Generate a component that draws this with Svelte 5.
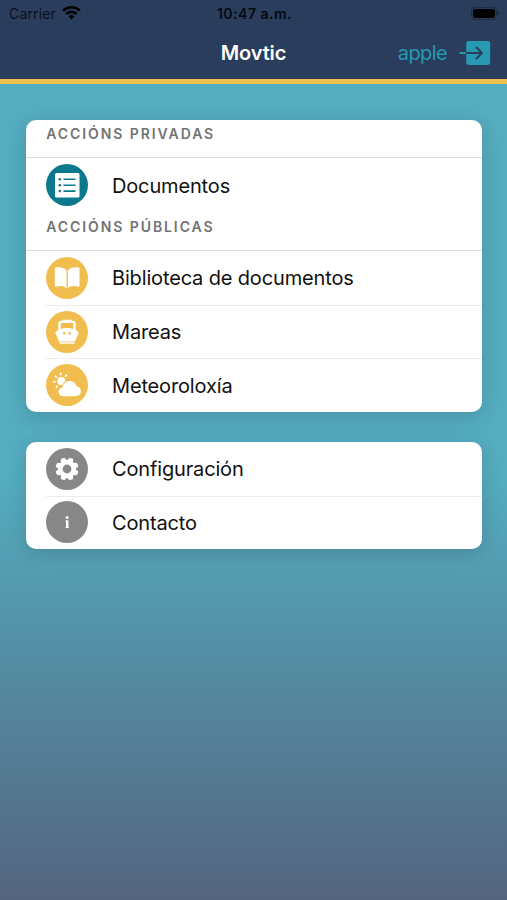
<script lang="ts">
  /**
   * Movtic main menu
   * Status bar, toolbar and grouped navigation cards
   */

  type IconName = 'list' | 'book' | 'boat' | 'weather' | 'gear' | 'info';

  interface Item {
    icon: IconName;
    label: string;
    tone: 'teal' | 'yellow' | 'gray';
  }

  interface Group {
    title?: string;
    items: Item[];
  }

  // Each card holds one or more titled groups
  const cards: Group[][] = [
    [
      {
        title: 'Accións privadas',
        items: [{ icon: 'list', label: 'Documentos', tone: 'teal' }],
      },
      {
        title: 'Accións públicas',
        items: [
          { icon: 'book', label: 'Biblioteca de documentos', tone: 'yellow' },
          { icon: 'boat', label: 'Mareas', tone: 'yellow' },
          { icon: 'weather', label: 'Meteoroloxía', tone: 'yellow' },
        ],
      },
    ],
    [
      {
        items: [
          { icon: 'gear', label: 'Configuración', tone: 'gray' },
          { icon: 'info', label: 'Contacto', tone: 'gray' },
        ],
      },
    ],
  ];

  const user = 'apple';
  const teeth = [0, 45, 90, 135, 180, 225, 270, 315];
  const rays = [-230, -185, -140, -95, -50];
</script>

{#snippet glyph(name: IconName)}
  <svg class="glyph" viewBox="0 0 42 42" aria-hidden="true">
    {#if name === 'list'}
      <rect x="9" y="9" width="24.5" height="24.5" rx="1.5" fill="#fff" />
      <g stroke="currentColor" stroke-width="1.6" stroke-linecap="round">
        <path d="M18 15.3h11M18 21.2h11M18 27.1h11" />
      </g>
      <g fill="currentColor">
        <circle cx="13.8" cy="15.3" r="1.3" />
        <circle cx="13.8" cy="21.2" r="1.3" />
        <circle cx="13.8" cy="27.1" r="1.3" />
      </g>
    {:else if name === 'book'}
      <g fill="#fff">
        <path d="M20.5 13.5C19 10.8 15.5 10 10.2 10.2Q8.8 10.3 8.8 11.7V28.6Q8.8 29.9 10.2 29.8C14.5 28.4 18.2 28.6 20.5 31.6Z" />
        <path d="M21.8 13.5C23.3 10.8 26.8 10 32.1 10.2Q33.5 10.3 33.5 11.7V28.6Q33.5 29.9 32.1 29.8C27.8 28.4 24.1 28.6 21.8 31.6Z" />
      </g>
    {:else if name === 'boat'}
      <path
        d="M13.5 19V12.6Q13.5 10.9 15.2 10.9H26.8Q28.5 10.9 28.5 12.6V19"
        fill="none"
        stroke="#fff"
        stroke-width="2.4"
      />
      <path d="M16.5 10.8V9.7Q16.5 8.8 17.4 8.8H24.6Q25.5 8.8 25.5 9.7V10.8Z" fill="#fff" />
      <path
        d="M12 19.2C15 17.6 18 17 21 17S27 17.6 30 19.2L31.8 20.5Q32.9 21.3 32.5 22.4L29 30.6H13L9.5 22.4Q9.1 21.3 10.2 20.5Z"
        fill="#fff"
      />
      <g fill="currentColor">
        <ellipse cx="18.2" cy="22.2" rx="1.1" ry="1.7" />
        <ellipse cx="23.8" cy="22.2" rx="1.1" ry="1.7" />
      </g>
      <path d="M14 32H28" fill="none" stroke="#fff" stroke-width="1.5" stroke-linecap="round" />
    {:else if name === 'weather'}
      <circle cx="15.4" cy="17.2" r="4.1" fill="#fff" />
      <g stroke="#fff" stroke-width="1.8" stroke-linecap="round">
        {#each rays as angle}
          <path d="M22 17.2h1.3" transform="rotate({angle} 15.4 17.2)" />
        {/each}
      </g>
      <path
        d="M17.5 32.2C14.6 32.2 12.5 30.4 12.5 27.8C12.5 25.5 14.2 23.8 16.6 23.4C17.2 19.5 20.1 17.1 23.7 17.1C27 17.1 29.7 19.2 30.5 22.3C33.2 22.7 35 24.6 35 27.3C35 30.1 32.8 32.2 29.8 32.2Z"
        fill="#fff"
        stroke="currentColor"
        stroke-width="1.6"
        paint-order="stroke"
      />
    {:else if name === 'gear'}
      <g fill="#fff">
        {#each teeth as angle}
          <path
            d="M17.9 13.5L18.7 10.3Q18.9 9.5 19.7 9.5H22.3Q23.1 9.5 23.3 10.3L24.1 13.5Z"
            transform="rotate({angle + 22.5} 21 21)"
          />
        {/each}
      </g>
      <circle cx="21" cy="21" r="6.8" fill="none" stroke="#fff" stroke-width="4.8" />
    {:else}
      <circle cx="21.1" cy="16.4" r="1.5" fill="#fff" />
      <path d="M19.4 20H21.2M19.4 26.5H22.8" fill="none" stroke="#fff" stroke-width="1.1" />
      <path d="M21.2 19.4V27" stroke="#fff" stroke-width="2.5" />
    {/if}
  </svg>
{/snippet}

<div class="screen">
  <header class="header">
    <div class="status-bar">
      <div class="carrier">
        <span>Carrier</span>
        <svg width="19" height="15" viewBox="0 0 19 15" fill="none" stroke="currentColor" stroke-width="2.7">
          <path d="M1.2 5.6a12 12 0 0 1 16.6 0" />
          <path d="M4.3 9a7.6 7.6 0 0 1 10.4 0" />
          <path d="M9.5 14.4L6.6 11.4a4.2 4.2 0 0 1 5.8 0Z" fill="currentColor" stroke="none" />
        </svg>
      </div>
      <span class="time">10:47 a.m.</span>
      <svg class="battery" width="29" height="14" viewBox="0 0 29 14">
        <rect x="0.5" y="0.4" width="25" height="12" rx="3.6" fill="none" stroke="#000" stroke-opacity="0.3" />
        <rect x="2" y="1.9" width="22" height="9" rx="2.3" fill="#000" />
        <path d="M26.8 4.5v4q1.5-.6 1.5-2t-1.5-2" fill="#000" fill-opacity="0.4" />
      </svg>
    </div>

    <div class="toolbar">
      <h1 class="title">Movtic</h1>
      <button type="button" class="user">
        <span>{user}</span>
        <svg width="32" height="26" viewBox="0 0 32 26" fill="none" stroke-linecap="round" stroke-linejoin="round">
          <rect x="7.2" y="1" width="24" height="24" rx="2.4" fill="#2799b3" />
          <path d="M1.2 13H8" stroke="#2799b3" stroke-width="1.9" />
          <path d="M7.5 13H22.5M17.5 7.5L23 13L17.5 18.5" stroke="#2a3d5d" stroke-width="1.9" />
        </svg>
      </button>
    </div>
  </header>

  <main class="content">
    {#each cards as groups}
      <section class="card">
        {#each groups as group}
          {#if group.title}
            <h2 class="group-title">{group.title}</h2>
          {/if}
          <ul class="list">
            {#each group.items as item}
              <li class="item">
                <span class="avatar {item.tone}">{@render glyph(item.icon)}</span>
                <span class="label">{item.label}</span>
              </li>
            {/each}
          </ul>
        {/each}
      </section>
    {/each}
  </main>
</div>

<style>
  :global(body) {
    margin: 0;
  }

  .screen {
    display: flex;
    flex-direction: column;
    height: 900px;
    overflow: hidden;
    font-family: Inter, 'Liberation Sans', sans-serif;
    color: #111;
    background: linear-gradient(180deg, #54acbf 0, #54acbf 480px, #54647f 100%);
  }

  .header {
    box-sizing: border-box;
    height: 84px;
    flex: none;
    color: #fff;
    background: #2a3d5d;
    border-bottom: 5px solid #eec04f;
  }

  .status-bar {
    display: grid;
    grid-template-columns: 1fr auto 1fr;
    align-items: center;
    height: 27px;
    padding: 0 7px 0 9px;
    color: #050a12;
    font-size: 14px;
  }

  .carrier {
    display: flex;
    align-items: center;
    gap: 6px;
    color: #0a101a;
    letter-spacing: 0.15px;
  }

  .carrier svg {
    color: #000;
    margin-bottom: 2px;
  }

  .time {
    font-weight: 600;
    letter-spacing: 0.5px;
  }

  .battery {
    justify-self: end;
  }

  .toolbar {
    display: grid;
    grid-template-columns: 1fr auto 1fr;
    align-items: center;
    height: 51px;
    padding: 0 16px;
  }

  .title {
    grid-column: 2;
    margin: 0;
    font-size: 20px;
    font-weight: 600;
    line-height: 24px;
    letter-spacing: -0.15px;
  }

  .user {
    display: flex;
    align-items: center;
    justify-self: end;
    gap: 12px;
    padding: 0;
    border: 0;
    background: none;
    color: #2799b3;
    font: inherit;
    font-size: 20px;
    line-height: 24px;
    letter-spacing: -0.6px;
  }

  .content {
    display: flex;
    flex-direction: column;
    gap: 29.5px;
    padding: 35.5px 25.5px 0 26.2px;
  }

  .card {
    overflow: hidden;
    border-radius: 10px;
    background: #fff;
    box-shadow: 0 5px 20px rgba(0, 0, 0, 0.14);
  }

  .group-title {
    box-sizing: border-box;
    height: 38.8px;
    margin: 0;
    padding: 4.5px 20px 0;
    border-bottom: 1px solid #dcdde0;
    color: #737373;
    font-size: 14px;
    font-weight: 600;
    line-height: 20px;
    letter-spacing: 1.92px;
    text-transform: uppercase;
  }

  .list {
    margin: 0;
    padding: 0;
    list-style: none;
  }

  .item {
    display: flex;
    align-items: center;
    height: 53.8px;
    padding-left: 19.8px;
  }

  .item + .item {
    background: linear-gradient(#ececee, #ececee) 19.8px 0 / 100% 1px no-repeat;
  }

  .avatar {
    flex: none;
    width: 42px;
    height: 42px;
    border-radius: 50%;
  }

  .glyph {
    display: block;
    width: 100%;
    height: 100%;
  }

  .teal {
    color: #0c788d;
    background: #0c788d;
  }

  .yellow {
    color: #f0bd4e;
    background: #f0bd4e;
  }

  .gray {
    color: #878787;
    background: #878787;
  }

  .label {
    padding-top: 1px;
    margin-left: 24px;
    font-size: 20px;
    line-height: 24px;
    letter-spacing: -0.15px;
  }
</style>
